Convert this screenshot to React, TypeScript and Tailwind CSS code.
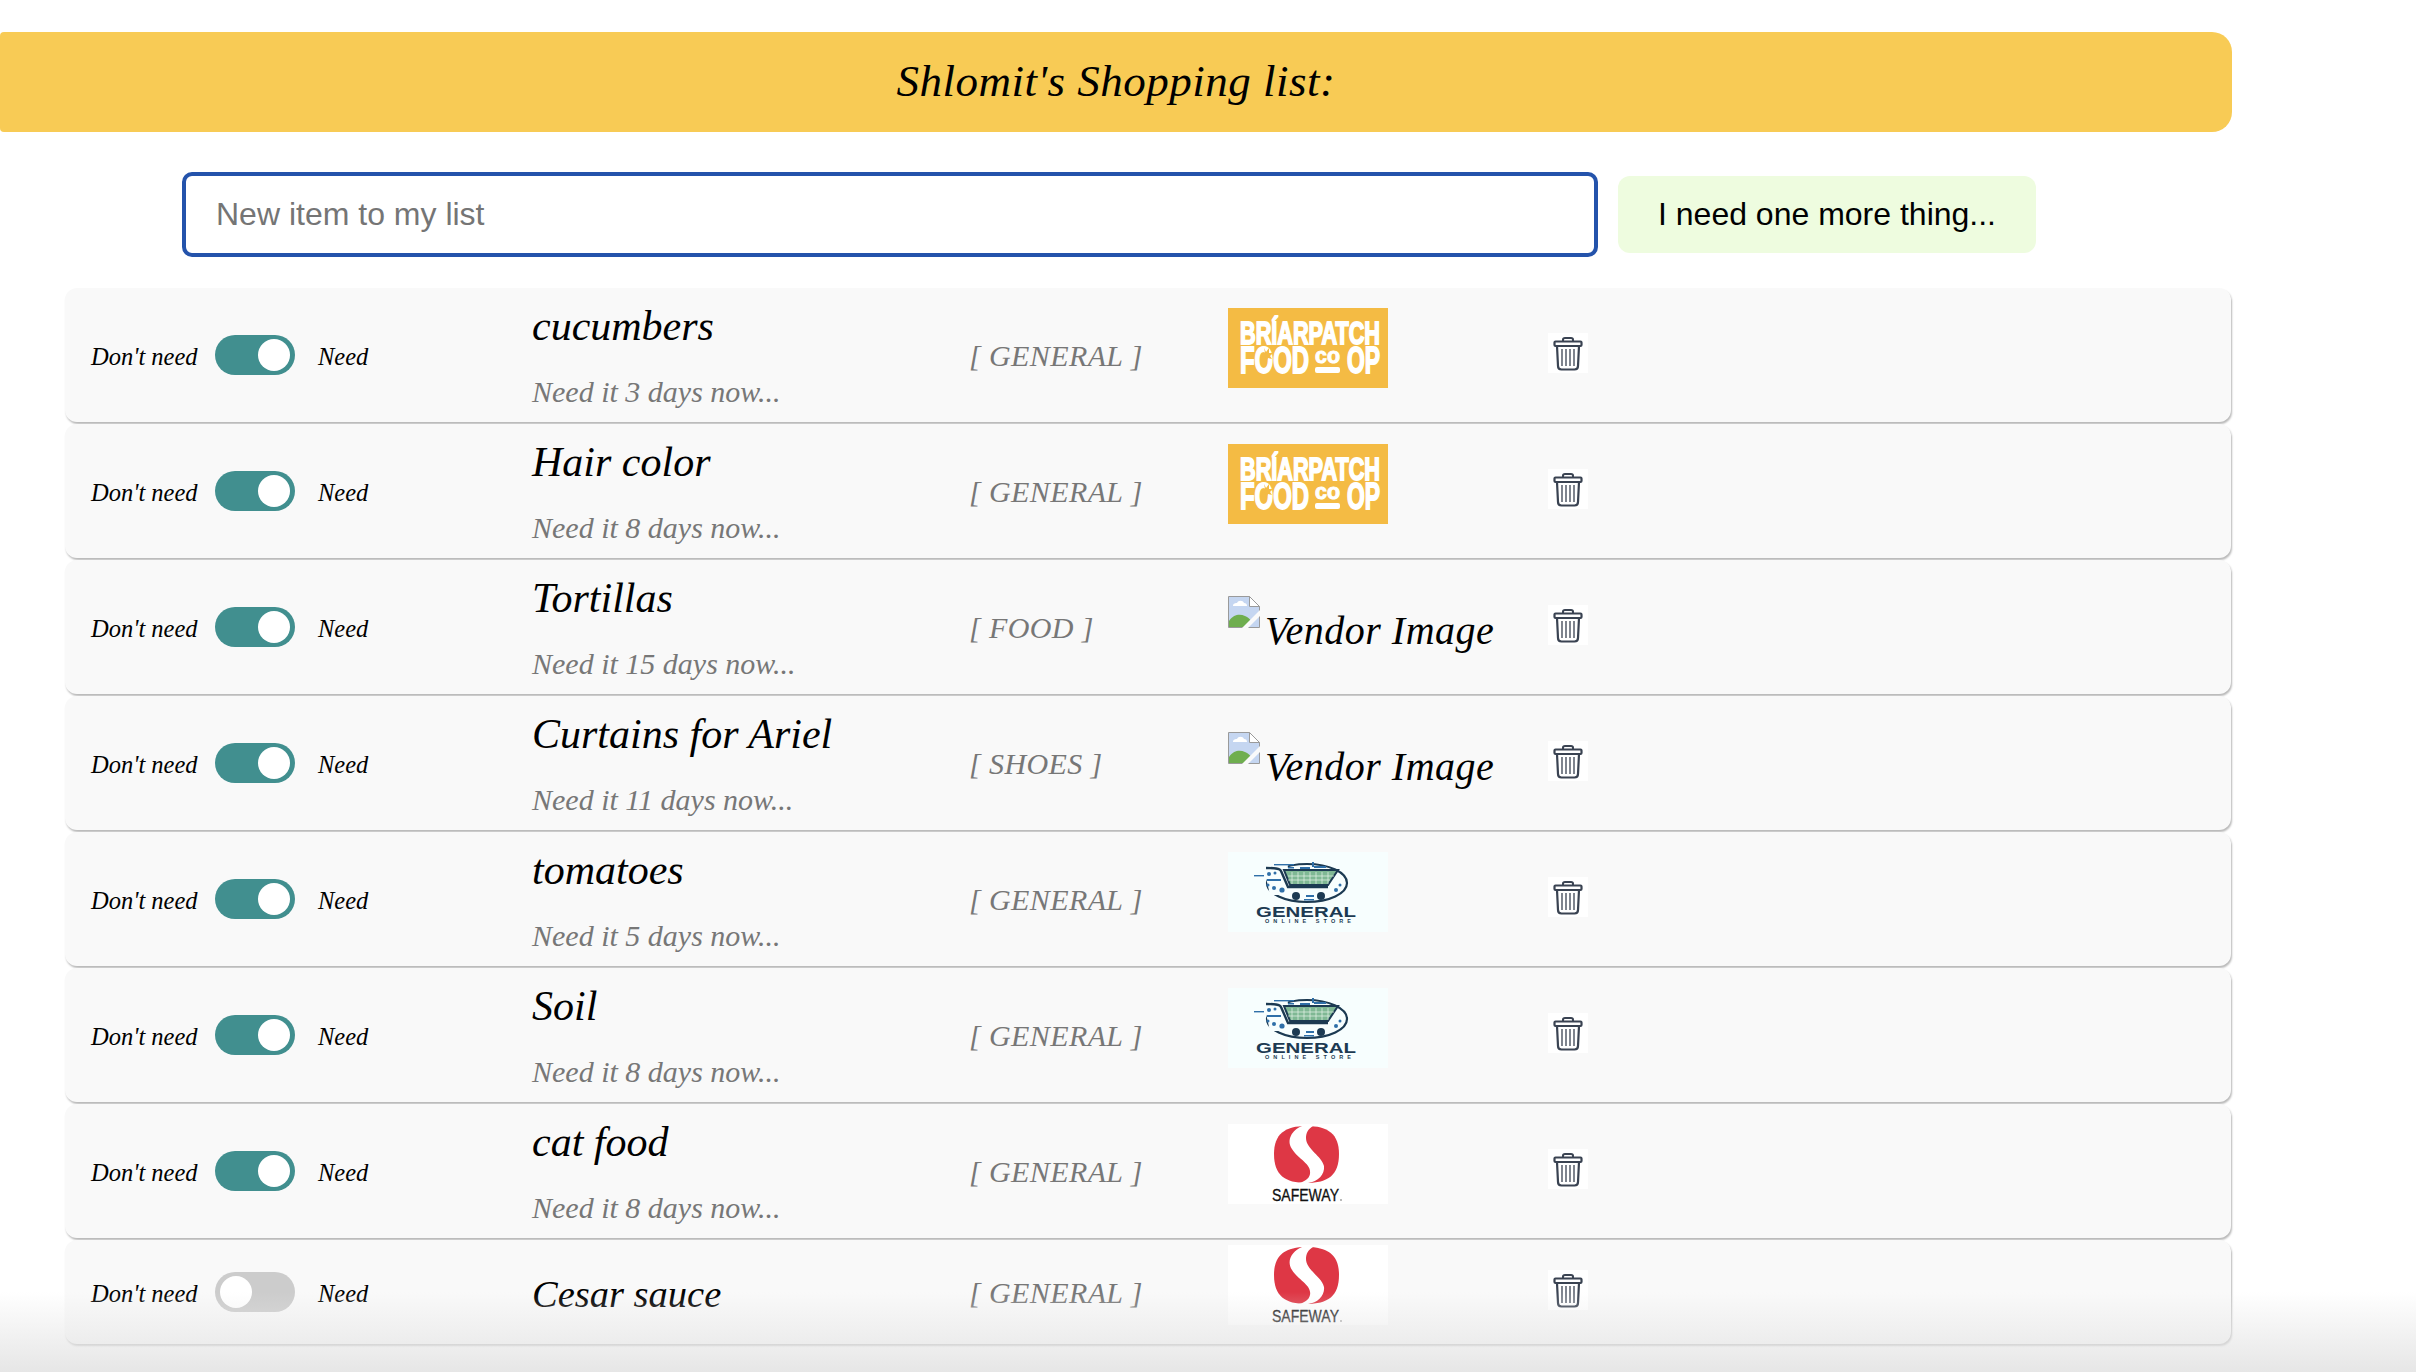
const hand = "font-['Liberation_Serif',serif] italic";

type Vendor = "briar" | "broken" | "general" | "safeway";

const items: { on: boolean; name: string; days?: number; cat: string; vendor: Vendor }[] = [
  { on: true, name: "cucumbers", days: 3, cat: "GENERAL", vendor: "briar" },
  { on: true, name: "Hair color", days: 8, cat: "GENERAL", vendor: "briar" },
  { on: true, name: "Tortillas", days: 15, cat: "FOOD", vendor: "broken" },
  { on: true, name: "Curtains for Ariel", days: 11, cat: "SHOES", vendor: "broken" },
  { on: true, name: "tomatoes", days: 5, cat: "GENERAL", vendor: "general" },
  { on: true, name: "Soil", days: 8, cat: "GENERAL", vendor: "general" },
  { on: true, name: "cat food", days: 8, cat: "GENERAL", vendor: "safeway" },
  { on: false, name: "Cesar sauce", cat: "GENERAL", vendor: "safeway" },
];

function BriarLogo() {
  return (
    <svg width="160" height="80" viewBox="0 0 160 80" className="block bg-[#f4bb44]">
      <g fill="#fff" fontFamily="'Liberation Sans', sans-serif" fontWeight="700" stroke="#fff" strokeWidth="1.8">
        <text x="12" y="36" fontSize="31" textLength="140" lengthAdjust="spacingAndGlyphs">BRÍARPATCH</text>
        <text x="12" y="65" fontSize="36" textLength="69" lengthAdjust="spacingAndGlyphs">FOOD</text>
        <text x="87" y="55" fontSize="22" textLength="25" lengthAdjust="spacingAndGlyphs" strokeWidth="1">co</text>
        <text x="119" y="65" fontSize="36" textLength="33" lengthAdjust="spacingAndGlyphs">OP</text>
      </g>
      <rect x="87" y="59" width="25" height="6" rx="2" fill="#fff" />
      <path d="M36 40l2 4 3-4 0 5 4 0-3 3 2 3-4-1-2 4-1-5-3-1 3-3z" fill="#f4bb44" />
    </svg>
  );
}

function GeneralLogo() {
  return (
    <svg width="160" height="80" viewBox="0 0 160 80" className="block bg-[#f7fefe]">
      <ellipse cx="79" cy="31" rx="40" ry="19" fill="none" stroke="#1c3a52" strokeWidth="2.200" />
      <path d="M36 17l14-6h10l-2 32H42z" fill="#f7fefe" />
      <path d="M38 16c8 0 14 0 15 3l7 16h40" fill="none" stroke="#1c3a52" strokeWidth="2.400" />
      <path d="M56 18h54l-10 15H62z" fill="#7fb894" stroke="#1c3a52" strokeWidth="2" />
      <path d="M64 20v12M70 20v12M76 20v12M82 20v12M88 20v12M94 20v12M100 20v12M60 24h46M60 28h42" stroke="#e8f4ea" strokeWidth="0.700" />
      <circle cx="68" cy="44" r="4" fill="#1c3a52" />
      <circle cx="93" cy="44" r="4" fill="#1c3a52" />
      <g fill="#2f6fa8">
        <rect x="26" y="23" width="10" height="1.400" />
        <rect x="46" y="12" width="20" height="1.400" />
        <circle cx="41" cy="22" r="2" />
        <circle cx="47" cy="21" r="1.500" />
        <rect x="39" y="27" width="14" height="2" />
        <circle cx="40" cy="33" r="1.500" />
        <circle cx="54" cy="38" r="2.600" />
        <circle cx="46" cy="36" r="2" />
        <rect x="60" y="15" width="6" height="1.500" />
        <rect x="72" y="15" width="10" height="2" />
        <rect x="86" y="14" width="12" height="2" />
        <rect x="84" y="10" width="2" height="5" />
        <circle cx="108" cy="38" r="2" />
        <circle cx="112" cy="33" r="1.500" />
        <rect x="78" y="43" width="8" height="2" />
        <rect x="76" y="47" width="10" height="1.500" />
      </g>
      <text x="28" y="65" fontSize="14" fontWeight="700" fill="#1c3a52" fontFamily="'Liberation Sans', sans-serif" textLength="100" lengthAdjust="spacingAndGlyphs">GENERAL</text>
      <text x="37" y="71" fontSize="5.500" fontWeight="700" fill="#1c3a52" fontFamily="'Liberation Sans', sans-serif" textLength="86" lengthAdjust="spacing">ONLINE STORE</text>
    </svg>
  );
}

function SafewayLogo() {
  return (
    <svg width="160" height="80" viewBox="0 0 160 80" className="block bg-white">
      <path d="M78.500 2C100 2 111 10 111 30c0 21-11 29-32.500 29C57 59 46 51 46 30 46 10 57 2 78.500 2z" fill="#de3745" />
      <path d="M74 2C64 6 58 16 64 25c6 10 20 15 18 25-1 5-6 8-12 9h10c10-1 17-9 16-17-2-10-18-17-18-28 0-5 2-9 7-12z" fill="#fff" />
      <text x="44" y="77" fontSize="16" fill="#111" stroke="#111" strokeWidth="0.300" fontFamily="'Liberation Sans', sans-serif" textLength="67" lengthAdjust="spacingAndGlyphs">SAFEWAY</text>
      <circle cx="113" cy="76" r="0.900" fill="#999" />
    </svg>
  );
}

function BrokenImage() {
  return (
    <svg width="32" height="32" viewBox="0 0 32 32" className="block shrink-0">
      <path d="M.5.5h21l10 10v21H.5z" fill="#c5d6f1" stroke="#9a9a9a" />
      <path d="M21.500.5v10h10z" fill="#fff" stroke="#9a9a9a" />
      <path d="M5 10c0-3 3-3 4-3 1-3 6-3 7 0 2 0 3 1 3 3z" fill="#fff" />
      <path d="M1 31V25C6 18 12 18 17 20c3 1 5 3 6 5l-6 6z" fill="#6fae4f" />
      <path d="M14 32L32 14v6L20 32z" fill="#fafafa" />
    </svg>
  );
}

function VendorLogo({ vendor }: { vendor: Vendor }) {
  if (vendor === "briar") return <BriarLogo />;
  if (vendor === "general") return <GeneralLogo />;
  if (vendor === "safeway") return <SafewayLogo />;
  return (
    <div className="flex h-[80px] w-[300px] items-start">
      <div className="mt-[16px]">
        <BrokenImage />
      </div>
      <span className={`${hand} mt-[27px] ml-[5px] text-[40px] leading-[48px] tracking-[0.5px] text-black`}>
        Vendor Image
      </span>
    </div>
  );
}

function TrashIcon() {
  return (
    <div className="mb-[4px] flex h-[40px] w-[40px] items-center justify-center bg-white">
      <svg width="40" height="40" viewBox="0 0 40 40" fill="none" stroke="#3a4352">
        <path d="M15 8V6.500C15 5.500 16 5 17 5h6c1 0 2 .5 2 1.500V8" strokeWidth="2" />
        <rect x="6.500" y="8.500" width="27" height="4.500" rx="1" strokeWidth="2.200" />
        <path d="M9 13l1 20c0 2 1.500 3.500 3.500 3.500h13c2 0 3.500-1.500 3.500-3.500l1-20" strokeWidth="2.200" />
        <path d="M14 16v17M18 16v17M22 16v17M26 16v17" strokeWidth="1.300" />
      </svg>
    </div>
  );
}

function Toggle({ on }: { on: boolean }) {
  return (
    <div className={`flex h-[40px] w-[80px] items-center rounded-full px-[5px] ${on ? "justify-end bg-[#418f8f]" : "justify-start bg-[#cccccc]"}`}>
      <div className="h-[32px] w-[32px] rounded-full bg-white" />
    </div>
  );
}

function Row({ item }: { item: (typeof items)[number] }) {
  return (
    <div className={`flex w-full items-center rounded-[12px] bg-[#f9f9f9] pl-[26px] shadow-[1px_2px_2px_rgba(0,0,0,0.28)] ${item.days ? "h-[134px]" : "h-[104px]"}`}>
      <div className="flex w-[441px] shrink-0 items-center">
        <span className={`${hand} w-[124px] pt-[4px] text-[24.500px] text-black`}>Don't need</span>
        <Toggle on={item.on} />
        <span className={`${hand} ml-[23px] pt-[4px] text-[24.500px] text-black`}>Need</span>
      </div>
      {item.days ? (
        <div className="flex h-full w-[437px] shrink-0 flex-col pt-[14px]">
          <span className={`${hand} text-[42px] leading-[48px] text-black`}>{item.name}</span>
          <span className={`${hand} mt-[22px] text-[30px] leading-[40px] text-[#777777]`}>
            Need it {item.days} days now...
          </span>
        </div>
      ) : (
        <div className={`${hand} mt-[4px] w-[437px] shrink-0 text-[38.500px] leading-[48px] text-black`}>{item.name}</div>
      )}
      <div className={`${hand} w-[259px] shrink-0 text-[30px] tracking-[0.4px] text-[#777777]`}>[ {item.cat} ]</div>
      <div className="mb-[15px] w-[320px] shrink-0">
        <VendorLogo vendor={item.vendor} />
      </div>
      <TrashIcon />
    </div>
  );
}

export default function App() {
  return (
    <main className="relative h-[1372px] w-full overflow-hidden bg-white pt-[32px] font-['Liberation_Sans',sans-serif]">
      <header className="flex h-[100px] w-[2232px] items-center justify-center rounded-l-[4px] rounded-r-[20px] bg-[#f8cb55]">
        <h1 className={`${hand} text-[45px] tracking-[0.5px] text-black`}>Shlomit's Shopping list:</h1>
      </header>

      <div className="mt-[40px] flex items-center pl-[182px]">
        <div className="flex h-[85px] w-[1416px] items-center rounded-[10px] border-[4px] border-[#2453ab] bg-white pb-[2px] pl-[30px] text-[32px] text-[#757575]">
          New item to my list
        </div>
        <div className="ml-[20px] flex h-[77px] w-[418px] items-center justify-center rounded-[12px] bg-[#eefcdf] pb-[2px] text-[32px] text-black">
          I need one more thing...
        </div>
      </div>

      <div className="mt-[31px] flex w-[2231px] flex-col gap-[2px] pl-[65px]">
        {items.map((item) => (
          <Row key={item.name} item={item} />
        ))}
      </div>

      {/* fade at the bottom edge */}
      <div className="pointer-events-none absolute right-0 bottom-0 left-0 h-[80px] bg-gradient-to-b from-transparent to-[#e6e6e6]" />
    </main>
  );
}
